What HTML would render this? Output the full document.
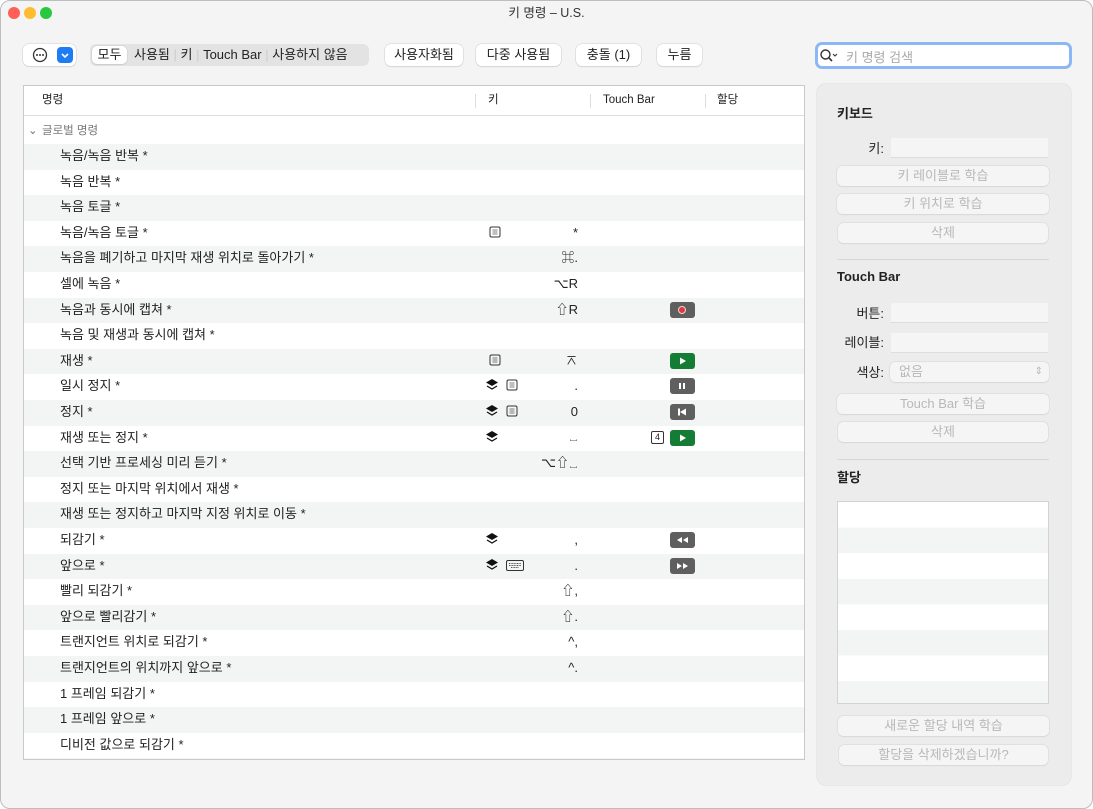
<!DOCTYPE html>
<html><head><meta charset="utf-8"><style>
*{margin:0;padding:0;box-sizing:border-box}
body{width:1093px;height:809px;background:#fff;font-family:"Liberation Sans","Noto Sans CJK KR",sans-serif;font-size:13px;color:#222;position:relative;overflow:hidden}
.win{position:absolute;left:0;top:0;width:1093px;height:809px;background:#f4f4f4;border:1px solid #bdbdbd;border-radius:10px;overflow:hidden}
.a{position:absolute}
.title{left:0;right:0;top:1px;text-align:center;font-size:12.5px;color:#333}
.tl{top:6px;width:12px;height:12px;border-radius:50%}
.btn{position:absolute;height:22px;background:#fff;border-radius:6px;box-shadow:0 0 0 .5px #cfcfcf,0 1px 1px rgba(0,0,0,.12);text-align:center;line-height:22px;font-size:13px;color:#222}
.tbl{left:22px;top:84px;width:782px;height:675px;background:#fff;border:1px solid #c9c9c9;overflow:hidden}
.row{position:absolute;left:0;width:780px;height:25.6px;line-height:23px}
.g{background:#f3f4f4}
.row .n{position:absolute;left:36px}
.row .k{position:absolute;right:226px}
.tb{position:absolute;top:4px;width:25px;height:16px;border-radius:3px;background:#5f5f5f}
.tb.gr{background:#157c35}
.ic{position:absolute;top:5px}
.panel{left:816px;top:83px;width:254px;height:701px;background:#ececec;border-radius:8px;box-shadow:0 0 0 .5px #ddd}
.h{font-weight:bold;font-size:13px;color:#222}
.lbl{font-size:13px;text-align:right;width:50px}
.fld{position:absolute;background:#f5f5f5;height:20px;border-bottom:1px solid #ddd}
.dbtn{position:absolute;height:20px;background:#f5f5f5;border-radius:5px;box-shadow:0 0 0 .5px #d5d5d5,0 1px 1px rgba(0,0,0,.08);text-align:center;line-height:20px;color:#b8b8b8;font-size:13px}
</style></head><body>
<div class="win">
<div class="a tl" style="left:7px;background:#fe5f57"></div>
<div class="a tl" style="left:23px;background:#febc2e"></div>
<div class="a tl" style="left:39px;background:#28c840"></div>
<div class="a title">키 명령 – U.S.</div>

<div class="btn" style="left:22px;top:43px;width:53px"></div>
<svg class="a" style="left:31px;top:46px" width="16" height="16"><circle cx="8" cy="8" r="6.5" stroke="#333" stroke-width="1.3" fill="none"/><circle cx="5" cy="8" r="1" fill="#333"/><circle cx="8" cy="8" r="1" fill="#333"/><circle cx="11" cy="8" r="1" fill="#333"/></svg>
<div class="a" style="left:56px;top:46px;width:16px;height:16px;background:#1e7cf5;border-radius:4px"><svg width="16" height="16"><path d="M5 7l3 3 3-3" stroke="#fff" stroke-width="1.6" fill="none"/></svg></div>

<div class="a" style="left:89px;top:43px;width:279px;height:22px;background:#e3e3e3;border-radius:6px"></div>
<div class="btn" style="left:91px;top:45px;width:35px;height:18px;line-height:18px;border-radius:5px">모두</div>
<div class="a" style="left:133px;top:45px;line-height:18px;font-size:13px">사용됨 <span style="color:#ccc">|</span> 키 <span style="color:#ccc">|</span> Touch Bar <span style="color:#ccc">|</span> 사용하지 않음</div>

<div class="btn" style="left:384px;top:43px;width:78px">사용자화됨</div>
<div class="btn" style="left:475px;top:43px;width:85px">다중 사용됨</div>
<div class="btn" style="left:575px;top:43px;width:65px">충돌 (1)</div>
<div class="btn" style="left:656px;top:43px;width:45px">누름</div>

<div class="a" style="left:814px;top:41px;width:257px;height:27px;border-radius:7px;border:3px solid #8db7f4;background:#fff"></div>
<svg class="a" style="left:818px;top:47px" width="22" height="16"><circle cx="6.5" cy="6.5" r="4.5" stroke="#333" stroke-width="1.4" fill="none"/><path d="M10 10l3 3" stroke="#333" stroke-width="1.6"/><path d="M14 6l2 2 2-2" stroke="#333" stroke-width="1.1" fill="none"/></svg>
<div class="a" style="left:845px;top:46px;color:#aaa;font-size:13px">키 명령 검색</div>

<div class="a tbl">
 <div class="a" style="left:0;top:0;width:780px;height:30px;border-bottom:1px solid #ddd;font-size:11.5px;line-height:28px">
  <span class="a" style="left:18px">명령</span>
  <span class="a" style="left:451px;top:8px;height:14px;border-left:1px solid #ddd"></span>
  <span class="a" style="left:464px">키</span>
  <span class="a" style="left:566px;top:8px;height:14px;border-left:1px solid #ddd"></span>
  <span class="a" style="left:579px">Touch Bar</span>
  <span class="a" style="left:681px;top:8px;height:14px;border-left:1px solid #ddd"></span>
  <span class="a" style="left:693px">할당</span>
 </div>
 <div class="row" style="top:33px;line-height:24px;color:#777;font-size:11.5px"><span class="a" style="left:4px">⌄</span><span class="a" style="left:18px">글로벌 명령</span></div>
 <div class="row g" style="top:58px"><span class="n">녹음/녹음 반복 *</span></div>
 <div class="row" style="top:83.6px"><span class="n">녹음 반복 *</span></div>
 <div class="row g" style="top:109.2px"><span class="n">녹음 토글 *</span></div>
 <div class="row" style="top:134.8px"><span class="n">녹음/녹음 토글 *</span><svg class="ic" style="left:465px" width="12" height="12"><rect x="1" y="1" width="10" height="10" rx="1.5" fill="none" stroke="#333"/><path d="M3.5 4h5M3.5 6h5M3.5 8h5" stroke="#555" stroke-width=".8"/></svg><span class="k">*</span></div>
 <div class="row g" style="top:160.4px"><span class="n">녹음을 폐기하고 마지막 재생 위치로 돌아가기 *</span><span class="k">⌘.</span></div>
 <div class="row" style="top:186px"><span class="n">셀에 녹음 *</span><span class="k">⌥R</span></div>
 <div class="row g" style="top:211.6px"><span class="n">녹음과 동시에 캡쳐 *</span><span class="k">⇧R</span><div class="tb" style="left:646px"><div class="a" style="left:8px;top:4px;width:8px;height:8px;border-radius:50%;border:1px solid #ddd;background:#e33"></div></div></div>
 <div class="row" style="top:237.2px"><span class="n">녹음 및 재생과 동시에 캡쳐 *</span></div>
 <div class="row g" style="top:262.8px"><span class="n">재생 *</span><svg class="ic" style="left:465px" width="12" height="12"><rect x="1" y="1" width="10" height="10" rx="1.5" fill="none" stroke="#333"/><path d="M3.5 4h5M3.5 6h5M3.5 8h5" stroke="#555" stroke-width=".8"/></svg><span class="k">⌅</span><div class="tb gr" style="left:646px"><svg width="25" height="16"><path d="M10 4.5l6 3.5-6 3.5z" fill="#fff"/></svg></div></div>
 <div class="row" style="top:288.4px"><span class="n">일시 정지 *</span><svg class="ic" style="left:461px;top:4px" width="14" height="14"><path d="M7 1l6 3.5-6 3.5-6-3.5z" fill="#111"/><path d="M2 8l5 3 5-3" stroke="#111" fill="none" stroke-width="1.3"/></svg><svg class="ic" style="left:482px" width="12" height="12"><rect x="1" y="1" width="10" height="10" rx="1.5" fill="none" stroke="#333"/><path d="M3.5 4h5M3.5 6h5M3.5 8h5" stroke="#555" stroke-width=".8"/></svg><span class="k">.</span><div class="tb" style="left:646px"><svg width="25" height="16"><path d="M10 5v6M14 5v6" stroke="#fff" stroke-width="2"/></svg></div></div>
 <div class="row g" style="top:314px"><span class="n">정지 *</span><svg class="ic" style="left:461px;top:4px" width="14" height="14"><path d="M7 1l6 3.5-6 3.5-6-3.5z" fill="#111"/><path d="M2 8l5 3 5-3" stroke="#111" fill="none" stroke-width="1.3"/></svg><svg class="ic" style="left:482px" width="12" height="12"><rect x="1" y="1" width="10" height="10" rx="1.5" fill="none" stroke="#333"/><path d="M3.5 4h5M3.5 6h5M3.5 8h5" stroke="#555" stroke-width=".8"/></svg><span class="k">0</span><div class="tb" style="left:646px"><svg width="25" height="16"><path d="M9 4.5v7" stroke="#fff" stroke-width="2"/><path d="M16 4.5l-6 3.5 6 3.5z" fill="#fff"/></svg></div></div>
 <div class="row" style="top:339.6px"><span class="n">재생 또는 정지 *</span><svg class="ic" style="left:461px;top:4px" width="14" height="14"><path d="M7 1l6 3.5-6 3.5-6-3.5z" fill="#111"/><path d="M2 8l5 3 5-3" stroke="#111" fill="none" stroke-width="1.3"/></svg><span class="k" style="font-size:9px">␣</span><div class="a" style="left:627px;top:5px;width:13px;height:13px;border:1px solid #333;border-radius:2px;font-size:9px;line-height:11px;text-align:center">4</div><div class="tb gr" style="left:646px"><svg width="25" height="16"><path d="M10 4.5l6 3.5-6 3.5z" fill="#fff"/></svg></div></div>
 <div class="row g" style="top:365.2px"><span class="n">선택 기반 프로세싱 미리 듣기 *</span><span class="k">⌥⇧<span style="font-size:9px">␣</span></span></div>
 <div class="row" style="top:390.8px"><span class="n">정지 또는 마지막 위치에서 재생 *</span></div>
 <div class="row g" style="top:416.4px"><span class="n">재생 또는 정지하고 마지막 지정 위치로 이동 *</span></div>
 <div class="row" style="top:442px"><span class="n">되감기 *</span><svg class="ic" style="left:461px;top:4px" width="14" height="14"><path d="M7 1l6 3.5-6 3.5-6-3.5z" fill="#111"/><path d="M2 8l5 3 5-3" stroke="#111" fill="none" stroke-width="1.3"/></svg><span class="k">,</span><div class="tb" style="left:646px"><svg width="25" height="16"><path d="M12 5v6l-5-3zM18 5v6l-5-3z" fill="#fff"/></svg></div></div>
 <div class="row g" style="top:467.6px"><span class="n">앞으로 *</span><svg class="ic" style="left:461px;top:4px" width="14" height="14"><path d="M7 1l6 3.5-6 3.5-6-3.5z" fill="#111"/><path d="M2 8l5 3 5-3" stroke="#111" fill="none" stroke-width="1.3"/></svg><svg class="ic" style="left:482px;top:6px" width="18" height="11"><rect x=".5" y=".5" width="17" height="10" rx="1.5" fill="none" stroke="#333"/><path d="M3 3.5h12M3 5.5h12M5 7.5h8" stroke="#555" stroke-width=".9" stroke-dasharray="1 .6"/></svg><span class="k">.</span><div class="tb" style="left:646px"><svg width="25" height="16"><path d="M7 5v6l5-3zM13 5v6l5-3z" fill="#fff"/></svg></div></div>
 <div class="row" style="top:493.2px"><span class="n">빨리 되감기 *</span><span class="k">⇧,</span></div>
 <div class="row g" style="top:518.8px"><span class="n">앞으로 빨리감기 *</span><span class="k">⇧.</span></div>
 <div class="row" style="top:544.4px"><span class="n">트랜지언트 위치로 되감기 *</span><span class="k">^,</span></div>
 <div class="row g" style="top:570px"><span class="n">트랜지언트의 위치까지 앞으로 *</span><span class="k">^.</span></div>
 <div class="row" style="top:595.6px"><span class="n">1 프레임 되감기 *</span></div>
 <div class="row g" style="top:621.2px"><span class="n">1 프레임 앞으로 *</span></div>
 <div class="row" style="top:646.8px"><span class="n">디비전 값으로 되감기 *</span></div>
 <div class="row g" style="top:672.4px"></div>
</div>

<div class="a panel">
 <div class="a h" style="left:20px;top:19px">키보드</div>
 <div class="a lbl" style="left:17px;top:54px">키:</div>
 <div class="fld" style="left:74px;top:54px;width:157px"></div>
 <div class="dbtn" style="left:20px;top:82px;width:212px">키 레이블로 학습</div>
 <div class="dbtn" style="left:20px;top:110px;width:212px">키 위치로 학습</div>
 <div class="dbtn" style="left:21px;top:139px;width:210px">삭제</div>
 <div class="a" style="left:20px;top:175px;width:212px;border-top:1px solid #d6d6d6"></div>
 <div class="a h" style="left:20px;top:185px">Touch Bar</div>
 <div class="a lbl" style="left:17px;top:219px">버튼:</div>
 <div class="fld" style="left:74px;top:219px;width:157px"></div>
 <div class="a lbl" style="left:17px;top:248px">레이블:</div>
 <div class="fld" style="left:74px;top:249px;width:157px"></div>
 <div class="a lbl" style="left:17px;top:278px">색상:</div>
 <div class="dbtn" style="left:73px;top:278px;width:159px;text-align:left;padding-left:9px">없음<span class="a" style="right:6px;top:0;font-size:10px">⇕</span></div>
 <div class="dbtn" style="left:20px;top:310px;width:212px">Touch Bar 학습</div>
 <div class="dbtn" style="left:21px;top:338px;width:210px">삭제</div>
 <div class="a" style="left:20px;top:375px;width:212px;border-top:1px solid #d6d6d6"></div>
 <div class="a h" style="left:20px;top:383px">할당</div>
 <div class="a" style="left:20px;top:417px;width:212px;height:203px;border:1px solid #d3d3d3;background:repeating-linear-gradient(#fff 0 25.6px,#f3f4f4 25.6px 51.2px)"></div>
 <div class="dbtn" style="left:21px;top:632px;width:211px">새로운 할당 내역 학습</div>
 <div class="dbtn" style="left:22px;top:661px;width:209px">할당을 삭제하겠습니까?</div>
</div>
</div>
</body></html>
